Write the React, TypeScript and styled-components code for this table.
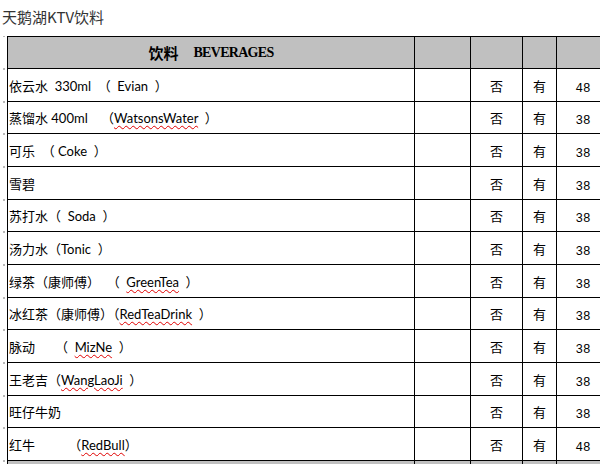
import React from "react";
import styled, { createGlobalStyle } from "styled-components";

const Global = createGlobalStyle`
  html, body { margin: 0; padding: 0; background: #fff; }
  body { width: 600px; height: 464px; overflow: hidden; font-family: "Noto Sans CJK SC", sans-serif; }
`;

const Page = styled.div`
  width: 600px;
  height: 464px;
  overflow: hidden;
  display: flex;
  flex-direction: column;
`;

const Title = styled.div`
  flex: none;
  height: 36px;
  padding: 7px 0 0 2px;
  box-sizing: border-box;
  font-family: "Noto Sans CJK SC", "Liberation Sans", sans-serif;
  font-size: 15px;
  line-height: 20px;
  color: #333;
  white-space: nowrap;
`;

const Sheet = styled.div`
  flex: none;
  display: flex;
  flex-direction: column;
  width: 607px;
`;

const Row = styled.div<{ $h: number }>`
  flex: none;
  display: grid;
  grid-template-columns: 7px 408px 56px 52px 34px 50px;
  height: ${(p) => p.$h}px;
`;

const Gutter = styled.div<{ $last?: boolean }>`
  background:
    linear-gradient(#b8b8b8, #b8b8b8) 3px 0 / 2px 1px no-repeat
    ${(p) => (p.$last ? ", linear-gradient(#b8b8b8, #b8b8b8) 3px 100% / 2px 1px no-repeat" : "")};
`;

const Cell = styled.div<{ $head?: boolean; $first?: boolean; $top?: boolean; $align?: string }>`
  box-sizing: border-box;
  background: ${(p) => (p.$head ? "#c0c0c0" : "#fff")};
  border-right: 1px solid #000;
  border-bottom: 1px solid #000;
  ${(p) => (p.$first ? "border-left: 1px solid #000;" : "")}
  ${(p) => (p.$top ? "border-top: 1px solid #000;" : "")}
  display: flex;
  align-items: center;
  justify-content: ${(p) => p.$align || "flex-start"};
  overflow: hidden;
  white-space: pre;
`;

const HeadText = styled.div`
  display: flex;
  align-items: center;
  gap: 15px;
  font-weight: bold;
  color: #000;
`;

const HeadCn = styled.span`
  font-family: "Noto Sans CJK SC", sans-serif;
  font-size: 15px;
  font-weight: bold;
`;

const HeadEn = styled.span`
  font-family: "Liberation Serif", serif;
  font-size: 14px;
  font-weight: bold;
  letter-spacing: -0.7px;
`;

const Name = styled.span`
  padding-left: 1px;
  font-family: "Lato", "Noto Sans CJK SC", sans-serif;
  font-size: 13px;
  color: #000;
`;

const Wavy = styled.span`
  text-decoration: underline wavy #e00000;
  text-decoration-thickness: 1px;
  text-underline-offset: 2px;
`;

const Mark = styled.span`
  font-family: "Noto Sans CJK SC", sans-serif;
  font-size: 13px;
  color: #000;
`;

const Price = styled.span`
  display: block;
  font-family: "Liberation Mono", monospace;
  font-size: 12.5px;
  line-height: 13px;
  padding: 8px 0 0 3px;
  color: #000;
`;

type Item = { parts: (string | { w: string })[]; price: string };

const items: Item[] = [
  { parts: ["依云水  330ml  （  Evian  ）"], price: "48" },
  { parts: ["蒸馏水 400ml    （", { w: "WatsonsWater" }, "  ）"], price: "38" },
  { parts: ["可乐  （ Coke  ）"], price: "38" },
  { parts: ["雪碧"], price: "38" },
  { parts: ["苏打水（  Soda  ）"], price: "38" },
  { parts: ["汤力水（Tonic  ）"], price: "38" },
  { parts: ["绿茶（康师傅）  （  ", { w: "GreenTea" }, "  ）"], price: "38" },
  { parts: ["冰红茶（康师傅）（", { w: "RedTeaDrink" }, "  ）"], price: "38" },
  { parts: ["脉动      （  ", { w: "MizNe" }, "  ）"], price: "38" },
  { parts: ["王老吉（", { w: "WangLaoJi" }, "  ）"], price: "38" },
  { parts: ["旺仔牛奶"], price: "38" },
  { parts: ["红牛          （", { w: "RedBull" }, "）"], price: "48" },
];

const heights = [33, 32, 33, 33, 32, 33, 33, 32, 33, 33, 32, 33];

export default function App() {
  return (
    <Page>
      <Global />
      <Title>天鹅湖KTV饮料</Title>
      <Sheet>
        <Row $h={33}>
          <Gutter $last />
          <Cell $head $first $top $align="center">
            <HeadText>
              <HeadCn>饮料</HeadCn>
              <HeadEn>BEVERAGES</HeadEn>
            </HeadText>
          </Cell>
          <Cell $head $top />
          <Cell $head $top />
          <Cell $head $top />
          <Cell $head $top />
        </Row>
        {items.map((it, i) => (
          <Row key={i} $h={heights[i]}>
            <Gutter $last />
            <Cell $first>
              <Name>
                {it.parts.map((p, j) =>
                  typeof p === "string" ? (
                    <React.Fragment key={j}>{p}</React.Fragment>
                  ) : (
                    <Wavy key={j}>{p.w}</Wavy>
                  )
                )}
              </Name>
            </Cell>
            <Cell />
            <Cell $align="center">
              <Mark>否</Mark>
            </Cell>
            <Cell $align="center">
              <Mark>有</Mark>
            </Cell>
            <Cell $align="center">
              <Price>{it.price}</Price>
            </Cell>
          </Row>
        ))}
        <Row $h={20}>
          <Gutter />
          <Cell $head $first />
          <Cell $head />
          <Cell $head />
          <Cell $head />
          <Cell $head />
        </Row>
      </Sheet>
    </Page>
  );
}
